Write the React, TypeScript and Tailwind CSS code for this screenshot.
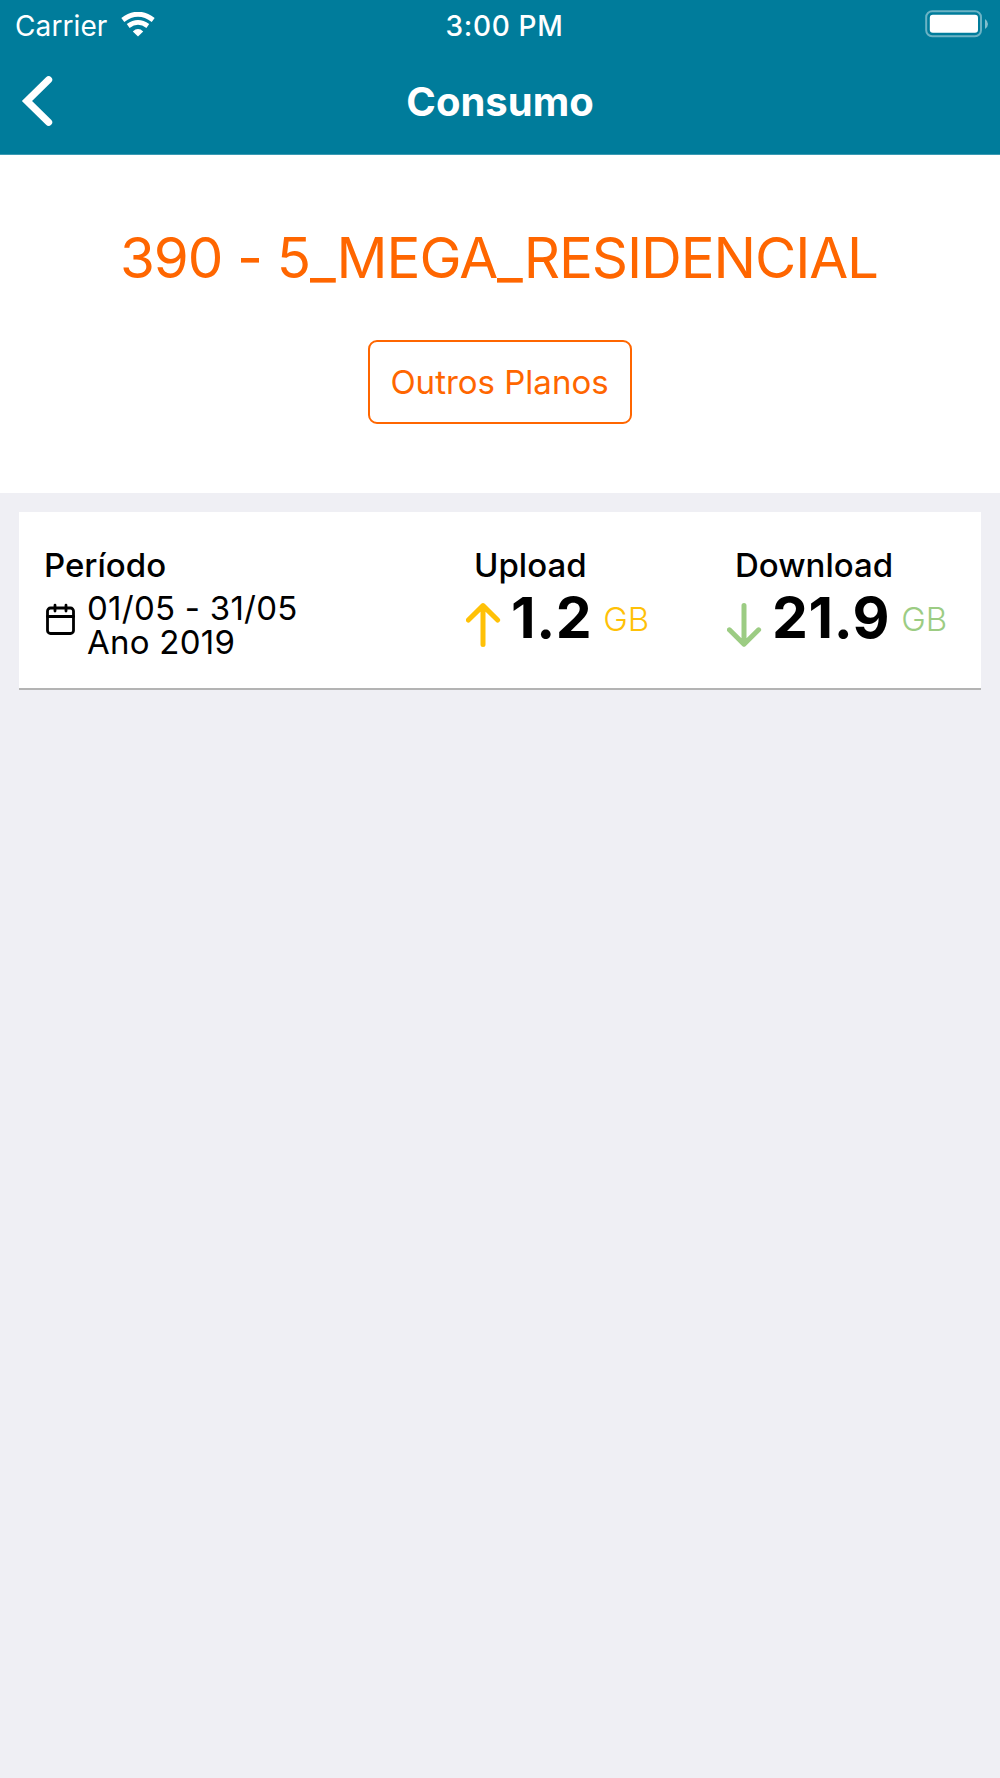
import React from "react";

function StatusBar() {
  return (
    <div className="grid h-[52px] grid-cols-3 items-center">
      <div className="flex items-center pl-[15px]">
        <span className="w-[106px] text-[28px] leading-[50px] tracking-[0.1px]">Carrier</span>
        <svg className="-mt-[2px]" width="34" height="26" viewBox="0 0 34 26" fill="none">
          <path d="M1.8 8 Q17 -3.6 32.2 8" stroke="white" strokeWidth="4.9" />
          <path d="M7.2 14 Q17 6.8 26.8 14" stroke="white" strokeWidth="4.7" />
          <path d="M11.8 19.4 Q17 14.6 22.2 19.4 L17 24.6 Z" fill="white" />
        </svg>
      </div>
      <div className="pl-[9px] text-center text-[28px] font-medium leading-[50px] tracking-[0.7px]">3:00 PM</div>
      <div className="flex items-center justify-end pr-[12px]">
        <svg className="-mt-[4px]" width="63" height="28" viewBox="0 0 63 28" fill="none">
          <rect x="1.2" y="1.2" width="54.8" height="25" rx="6" stroke="white" strokeOpacity="0.42" strokeWidth="2" />
          <rect x="4.8" y="4.8" width="48.2" height="18" rx="3" fill="white" />
          <path d="M60 9 Q63 11 63 14 Q63 17 60 19 Z" fill="white" fillOpacity="0.5" />
        </svg>
      </div>
    </div>
  );
}

function Usage({
  label,
  value,
  color,
  arrow,
  className,
  unitClass,
}: {
  label: string;
  value: string;
  color: string;
  arrow: string;
  className: string;
  unitClass: string;
}) {
  return (
    <div className={className}>
      <div className="pl-[8px] text-[33px] font-medium leading-[34px]">{label}</div>
      <div className="mt-[8px] flex h-[56px] items-center">
        <svg className="mt-[12px] shrink-0" width="36" height="46" viewBox="0 0 36 46" fill="none">
          <path d={arrow} stroke={color} strokeWidth="5" strokeLinecap="round" strokeLinejoin="round" />
        </svg>
        <span className="ml-[9px] text-[57px] font-bold leading-[56px] tracking-[0.6px]">{value}</span>
        <span className={unitClass}>GB</span>
      </div>
    </div>
  );
}

export default function App() {
  return (
    <div className="min-h-[1778px] w-[1000px] bg-[#efeff4] font-['Inter',sans-serif] text-black">
      <header className="h-[155px] border-b border-[#3b9ab3] bg-[#007c9b] text-white">
        <StatusBar />
        <div className="grid h-[100px] grid-cols-[200px_1fr_200px] items-center">
          <svg className="ml-[20px] -mt-[2px]" width="36" height="54" viewBox="0 0 36 54" fill="none">
            <path d="M28.6 5.8 L7 27 L28.6 48.2" stroke="white" strokeWidth="7.2" strokeLinecap="round" />
          </svg>
          <h1 className="text-center text-[40px] font-bold leading-[50px]">Consumo</h1>
        </div>
      </header>

      <section className="flex h-[338px] flex-col items-center bg-white pt-[67px] text-[#ff6600]">
        <h2 className="whitespace-nowrap pr-[2px] text-[56.5px] leading-[72px] tracking-[-1.1px]">390 - 5_MEGA_RESIDENCIAL</h2>
        <button className="mt-[46px] h-[84px] w-[264px] whitespace-nowrap rounded-[9px] border-2 border-[#ff6600] pr-[1px] text-[33px] leading-[34px]">
          Outros Planos
        </button>
      </section>

      <section className="mx-[19px] mt-[19px] flex h-[178px] border-b-2 border-[#b3b3b3] bg-white pl-[24px] pt-[36px]">
        <div className="w-[423px]">
          <div className="pl-[1px] text-[33px] font-medium leading-[34px]">Período</div>
          <div className="mt-[9px] flex">
            <svg className="mt-[12px] shrink-0" width="34" height="34" viewBox="0 0 34 34" fill="none" stroke="black" strokeWidth="2.8" strokeLinecap="round">
              <rect x="4.5" y="5" width="26" height="25.5" rx="3" />
              <path d="M4.5 13.5 H30.5 M12 2.2 V8 M23 2.2 V8" />
            </svg>
            <div className="ml-[10px] whitespace-nowrap text-[33px] leading-[34px] tracking-[0.25px]">
              <div>01/05 - 31/05</div>
              <div>Ano 2019</div>
            </div>
          </div>
        </div>
        <Usage
          label="Upload"
          value="1.2"
          color="#ffc107"
          arrow="M17 43.5 V5 M2.4 19 L17 4.6 L31.6 19"
          className="w-[261px]"
          unitClass="ml-[11px] mt-[3px] text-[33px] font-light text-[#ffc107]"
        />
        <Usage
          label="Download"
          value="21.9"
          color="#9ccc83"
          arrow="M17 4.6 V42.8 M2.4 28.8 L17 43.2 L31.6 28.8"
          className="w-[240px]"
          unitClass="ml-[11px] mt-[3px] text-[33px] font-light text-[#9ccc83]"
        />
      </section>
    </div>
  );
}
